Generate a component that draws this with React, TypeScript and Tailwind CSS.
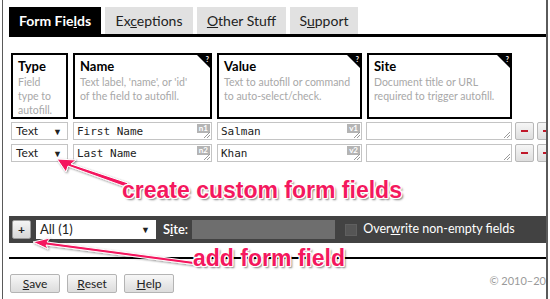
import { ReactNode } from "react";

const ui = { fontFamily: "Lato, 'Open Sans', sans-serif" };
const mono = { fontFamily: "'DejaVu Sans Mono', 'Liberation Mono', monospace" };
const callout = {
  fontFamily: "'Liberation Sans', Arial, sans-serif",
  textShadow:
    "-1px 0 #fff, 1px 0 #fff, 0 -1px #fff, 0 1px #fff, -1px -1px #fff, 1px 1px #fff, -1px 1px #fff, 1px -1px #fff, 2px 2px 2px rgba(0,0,0,0.5)",
};

function HelpCorner() {
  return (
    <div className="absolute right-0 top-0 h-0 w-0 border-l-[13px] border-t-[13px] border-l-transparent border-t-black">
      <span className="absolute -top-[13px] right-[1px] text-[7px] leading-[8px] font-bold text-white">?</span>
    </div>
  );
}

function HeaderCard({ title, desc, help }: { title: string; desc: ReactNode; help?: boolean }) {
  return (
    <div className="relative h-[66px] border-2 border-black bg-white px-[5px] pt-[3px]">
      {help && <HelpCorner />}
      <div className="text-[13px] font-bold leading-[17px] text-black">{title}</div>
      <div className="whitespace-nowrap text-[10.5px] leading-[14px] text-[#a8a8a8]">{desc}</div>
    </div>
  );
}

function Grip() {
  return (
    <svg className="absolute bottom-[1px] right-[1px]" width="7" height="7" viewBox="0 0 7 7">
      <path d="M1 7 L7 1 M4 7 L7 4" stroke="#9a9a9a" strokeWidth="1" />
    </svg>
  );
}

function Field({ value, badge }: { value?: string; badge?: string }) {
  return (
    <div className="relative flex h-[18px] items-center border border-[#c4c4c4] bg-white pl-[3px]">
      <span className="text-[11px] leading-none text-[#222]" style={mono}>
        {value}
      </span>
      {badge && (
        <span className="absolute right-[1px] top-[1px] bg-[#b4b4b4] px-[2px] text-[8px] font-bold leading-[9px] text-white">
          {badge}
        </span>
      )}
      <Grip />
    </div>
  );
}

function TypeSelect() {
  return (
    <div className="flex h-[18px] items-center justify-between border border-[#c4c4c4] bg-white pl-[4px] pr-[5px] text-[12px] leading-none text-[#222]">
      <span>Text</span>
      <span className="text-[9px]">▼</span>
    </div>
  );
}

function MinusButton() {
  return (
    <div className="flex h-[18px] w-[19px] shrink-0 items-center justify-center rounded-[2px] border border-[#b8b8b8] bg-gradient-to-b from-[#f6f6f6] to-[#dedede]">
      <span className="block h-[2px] w-[7px] bg-[#c0182a]" />
    </div>
  );
}

function Row({ name, badgeN, value, badgeV }: { name: string; badgeN: string; value: string; badgeV: string }) {
  return (
    <div className="flex h-[18px] items-center gap-[5px]">
      <div className="w-[57px] shrink-0">
        <TypeSelect />
      </div>
      <div className="w-[139px] shrink-0">
        <Field value={name} badge={badgeN} />
      </div>
      <div className="w-[145px] shrink-0">
        <Field value={value} badge={badgeV} />
      </div>
      <div className="ml-[-1px] w-[146px] shrink-0">
        <Field />
      </div>
      <div className="ml-[-2px] flex shrink-0 gap-[3px]">
        <MinusButton />
        <MinusButton />
      </div>
    </div>
  );
}

function Tab({ label, active, w }: { label: ReactNode; active?: boolean; w: string }) {
  return (
    <div
      className={`flex h-[27px] items-center justify-center text-[14px] ${w} ${
        active ? "bg-black font-bold text-white" : "bg-[#e1e1e1] text-[#222]"
      }`}
    >
      {label}
    </div>
  );
}

function FooterButton({ k, rest }: { k: string; rest: string }) {
  return (
    <div className="flex h-[19px] w-[50px] items-center justify-center rounded-[2px] border border-[#b4b4b4] bg-gradient-to-b from-[#f7f7f7] to-[#dcdcdc] text-[12px] text-[#222]">
      <span className="underline">{k}</span>
      {rest}
    </div>
  );
}

export default function App() {
  return (
    <div className="relative h-[299px] w-[550px] overflow-hidden bg-white pl-[2px]" style={ui}>
      <div className="h-full w-[546px] overflow-hidden border-l-[1px] border-r-[2px] border-[#5a5a5a] pl-[6px] pt-[7px]">
        {/* tabs */}
        <div className="flex gap-[4px]">
          <Tab
            active
            w="w-[92px]"
            label={
              <span>
                Form Fie<span className="underline">l</span>ds
              </span>
            }
          />
          <Tab
            w="w-[88px]"
            label={
              <span>
                Ex<span className="underline">c</span>eptions
              </span>
            }
          />
          <Tab
            w="w-[89px]"
            label={
              <span>
                <span className="underline">O</span>ther Stuff
              </span>
            }
          />
          <Tab
            w="w-[68px]"
            label={
              <span>
                S<span className="underline">u</span>pport
              </span>
            }
          />
        </div>
        <div className="h-[3px] bg-black" />

        {/* column headers */}
        <div className="ml-[2px] mt-[16px] flex gap-[5px]">
          <div className="w-[57px] shrink-0">
            <HeaderCard title="Type" desc={<>Field<br />type to<br />autofill.</>} />
          </div>
          <div className="w-[139px] shrink-0">
            <HeaderCard help title="Name" desc={<>Text label, 'name', or 'id'<br />of the field to autofill.</>} />
          </div>
          <div className="w-[145px] shrink-0">
            <HeaderCard help title="Value" desc={<>Text to autofill or command<br />to auto-select/check.</>} />
          </div>
          <div className="w-[145px] shrink-0">
            <HeaderCard help title="Site" desc={<>Document title or URL<br />required to trigger autofill.</>} />
          </div>
        </div>

        {/* rows */}
        <div className="ml-[2px] mt-[3px] flex flex-col gap-[4px]">
          <Row name="First Name" badgeN="n1" value="Salman" badgeV="v1" />
          <Row name="Last Name" badgeN="n2" value="Khan" badgeV="v2" />
        </div>

        {/* toolbar */}
        <div className="mt-[54px] flex h-[27px] w-[540px] items-center bg-[#424242] pl-[3px]">
          <div className="flex h-[19px] w-[19px] items-center justify-center rounded-[2px] border border-[#9a9a9a] bg-gradient-to-b from-[#f4f4f4] to-[#d8d8d8] text-[12px] font-bold leading-none text-[#222]">
            +
          </div>
          <div className="ml-[5px] flex h-[19px] w-[120px] items-center justify-between bg-white pl-[4px] pr-[6px] text-[13px] text-[#222]">
            <span>All (1)</span>
            <span className="text-[9px]">▼</span>
          </div>
          <div className="ml-[7px] text-[13px] font-semibold text-white">
            S<span className="underline">i</span>te:
          </div>
          <div className="ml-[4px] h-[19px] w-[143px] bg-[#6e6e6e]" />
          <div className="ml-[10px] h-[12px] w-[12px] border border-[#5f5f5f] bg-[#555]" />
          <div className="ml-[6px] text-[12.5px] text-white">
            Over<span className="underline">w</span>rite non-empty fields
          </div>
        </div>

        <div className="mt-[14px] h-[2px] w-[540px] bg-black" />

        {/* footer */}
        <div className="mt-[15px] flex w-[537px] items-start">
          <div className="ml-[1px] flex gap-[7px]">
            <FooterButton k="S" rest="ave" />
            <FooterButton k="R" rest="eset" />
            <FooterButton k="H" rest="elp" />
          </div>
          <div className="ml-auto text-[11px] leading-[14px] text-[#9a9a9a]">© 2010–20</div>
        </div>
      </div>

      {/* annotation arrows */}
      <svg className="pointer-events-none absolute left-0 top-0" width="550" height="299" viewBox="0 0 550 299">
        <defs>
          <filter id="sh" x="-10%" y="-10%" width="120%" height="120%">
            <feDropShadow dx="1" dy="1" stdDeviation="0.8" floodColor="#000" floodOpacity="0.45" />
          </filter>
        </defs>
        <g filter="url(#sh)" stroke="#fff" strokeWidth="1" strokeLinejoin="round">
          <polygon points="57,159 76,160 71,164 128,183 126,187 68,166 66,172" fill="#f4185e" />
          <polygon points="33,242 50,238 47,242 198,262 197,265 46,245 48,249" fill="#f4185e" />
        </g>
      </svg>

      <div
        className="pointer-events-none absolute left-[122px] top-[177px] text-[23px] font-bold leading-[26px] text-[#f4185e]"
        style={callout}
      >
        create custom form fields
      </div>
      <div
        className="pointer-events-none absolute left-[193px] top-[245px] text-[23px] font-bold leading-[26px] text-[#f4185e]"
        style={callout}
      >
        add form field
      </div>
    </div>
  );
}
